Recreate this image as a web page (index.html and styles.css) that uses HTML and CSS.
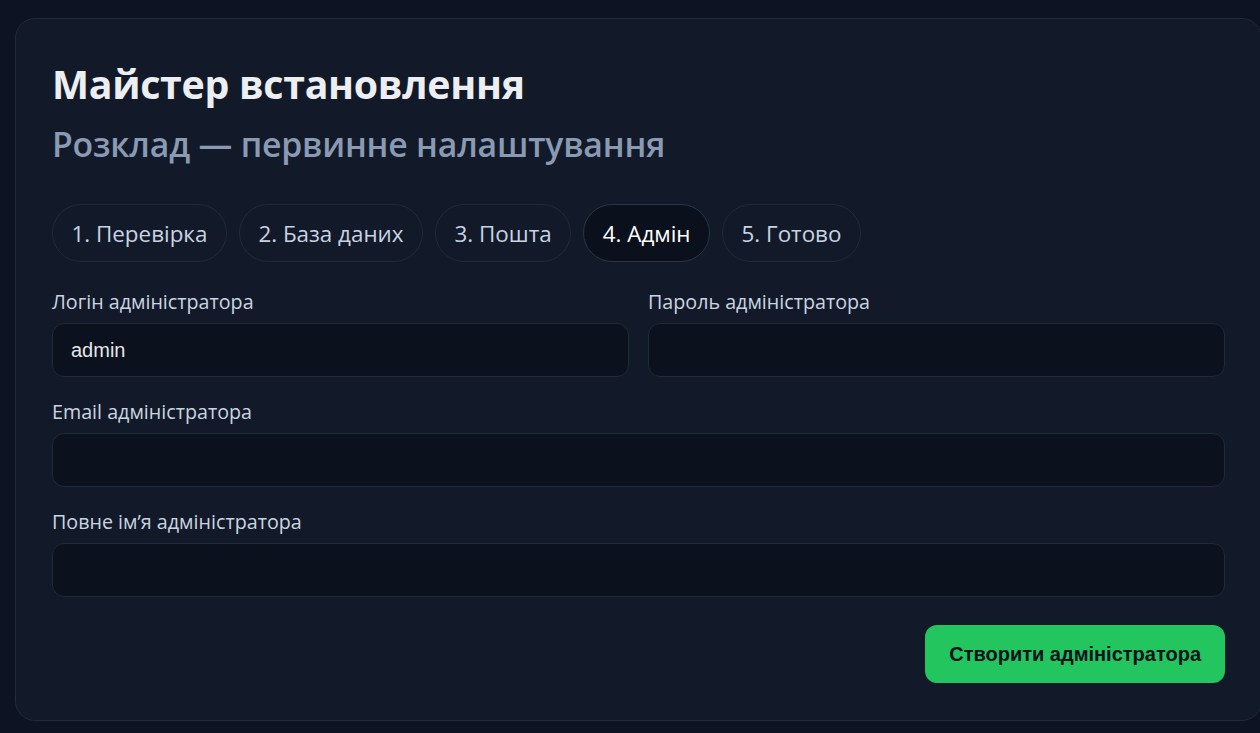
FILE: index.html
```html
<!DOCTYPE html>
<html lang="uk">
<head>
<meta charset="utf-8">
<title>Майстер встановлення</title>
<link rel="stylesheet" href="styles.css">
</head>
<body>
<main class="card">
  <h1 class="title">Майстер встановлення</h1>
  <h2 class="subtitle">Розклад — первинне налаштування</h2>
  <nav class="steps">
    <span class="step">1. Перевірка</span>
    <span class="step">2. База даних</span>
    <span class="step">3. Пошта</span>
    <span class="step step-active">4. Адмін</span>
    <span class="step">5. Готово</span>
  </nav>
  <form class="form">
    <div class="row two">
      <label class="field">
        <span class="label">Логін адміністратора</span>
        <input class="input" type="text" value="admin">
      </label>
      <label class="field">
        <span class="label">Пароль адміністратора</span>
        <input class="input" type="password" value="">
      </label>
    </div>
    <label class="field">
      <span class="label">Email адміністратора</span>
      <input class="input" type="email" value="">
    </label>
    <label class="field">
      <span class="label">Повне імʼя адміністратора</span>
      <input class="input" type="text" value="">
    </label>
    <div class="actions">
      <button class="btn" type="button">Створити адміністратора</button>
    </div>
  </form>
</main>
</body>
</html>
```

FILE: styles.css
```css
html, body {
  margin: 0;
  padding: 0;
  background: #0d1322;
  overflow: hidden;
}
body {
  padding: 18px 0 0 15px;
  font-family: "Open Sans", "Noto Sans", sans-serif;
  color: #e5e7eb;
}
.card {
  box-sizing: border-box;
  width: 1247px;
  background: #121a29;
  border: 1px solid #1f2a3a;
  border-radius: 20px;
  padding: 41px 36px 37px 36px;
}
.title {
  margin: 0;
  font-size: 39.3px;
  font-weight: 700;
  line-height: 48px;
  color: #eceef2;
  letter-spacing: -0.3px;
}
.subtitle {
  margin: 16px 0 0 0;
  font-size: 33.8px;
  font-weight: 600;
  line-height: 40px;
  color: #8a9ab3;
  letter-spacing: -0.2px;
}
.steps {
  display: flex;
  gap: 12px;
  margin-top: 40px;
}
.step {
  box-sizing: border-box;
  height: 58px;
  display: flex;
  align-items: center;
  padding: 0 18.5px;
  border: 1px solid #1f2a3a;
  border-radius: 29px;
  font-size: 22.4px;
  color: #c9d3e1;
}
.step-active {
  background: #0a101c;
  border-color: #2a3547;
  color: #ffffff;
}
.form {
  margin-top: 28px;
  display: flex;
  flex-direction: column;
  gap: 23px;
}
.row.two {
  display: grid;
  grid-template-columns: 1fr 1fr;
  gap: 19px;
}
.field {
  display: flex;
  flex-direction: column;
  gap: 9px;
}
.label {
  font-size: 19.7px;
  line-height: 24px;
  color: #cbd5e1;
}
.input {
  box-sizing: border-box;
  height: 54px;
  width: 100%;
  background: #0b111d;
  border: 1px solid #1f2a3a;
  border-radius: 12px;
  padding: 0 18px;
  font-family: "Liberation Sans", Arial, sans-serif;
  font-size: 20px;
  color: #e5e7eb;
  outline: none;
}
.actions {
  display: flex;
  justify-content: flex-end;
  margin-top: 5px;
}
.btn {
  height: 58px;
  padding: 0 24px;
  border: none;
  border-radius: 12px;
  background: #22c55e;
  color: #0b1220;
  font-family: "Liberation Sans", Arial, sans-serif;
  font-size: 20px;
  font-weight: 700;
}
```
